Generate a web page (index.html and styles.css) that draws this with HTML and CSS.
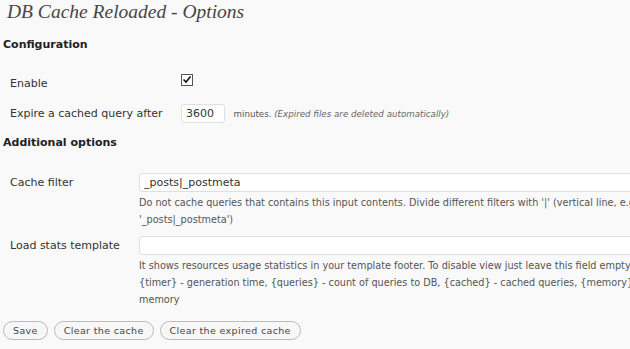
FILE: index.html
```
<!DOCTYPE html>
<html lang="en">
<head>
    <meta charset="UTF-8">
    <title>DB Cache Reloaded - Options</title>
    <link rel="stylesheet" href="styles.css">
</head>
<body>
    <div class="wrap">
        <h2 class="page-title">DB Cache Reloaded - Options</h2>
        <form class="options-form">
            <h3 class="section-title">Configuration</h3>
            <div class="form-table config-table">
                <div class="row row-enable">
                    <label class="row-label" for="enable">Enable</label>
                    <div class="row-field">
                        <span class="check" id="enable" role="checkbox" aria-checked="true">
                            <svg xmlns="http://www.w3.org/2000/svg" viewBox="0 0 12 12" width="12" height="12">
                                <rect x="0.5" y="0.5" width="11" height="11" fill="#fff" stroke="#555"/>
                                <path d="M2.5 5.5l2.5 2.5 4.5-5.5" fill="none" stroke="#111" stroke-width="1.6"/>
                            </svg>
                        </span>
                    </div>
                </div>
                <div class="row row-expire">
                    <label class="row-label" for="expire">Expire a cached query after</label>
                    <div class="row-field">
                        <input type="text" id="expire" class="small-text" value="3600">
                        <span class="unit">minutes. <em>(Expired files are deleted automatically)</em></span>
                    </div>
                </div>
            </div>

            <h3 class="section-title">Additional options</h3>
            <div class="form-table extra-table">
                <div class="row row-filter">
                    <label class="row-label" for="filter">Cache filter</label>
                    <div class="row-field">
                        <input type="text" id="filter" class="wide-text" value="_posts|_postmeta">
                        <p class="desc">Do not cache queries that contains this input contents. Divide different filters with '|' (vertical line, e.g. '_posts|_postmeta')</p>
                    </div>
                </div>
                <div class="row row-stats">
                    <label class="row-label" for="stats">Load stats template</label>
                    <div class="row-field">
                        <input type="text" id="stats" class="wide-text" value="">
                        <p class="desc">It shows resources usage statistics in your template footer. To disable view just leave this field empty. {timer} - generation time, {queries} - count of queries to DB, {cached} - cached queries, {memory} - memory</p>
                    </div>
                </div>
            </div>

            <div class="buttons">
                <button type="button" class="button">Save</button>
                <button type="button" class="button">Clear the cache</button>
                <button type="button" class="button">Clear the expired cache</button>
            </div>
        </form>
    </div>
</body>
</html>
```

FILE: styles.css
```
html, body {
    margin: 0;
    padding: 0;
    background: #f9f9f9;
}

html {
    overflow: hidden;
}

body {
    font-family: "DejaVu Sans", Verdana, sans-serif;
    font-size: 11px;
    color: #333;
    width: 700px;
    height: 349px;
}

.wrap {
    padding: 0 0 0 3px;
}

.page-title {
    margin: 0;
    padding: 0 0 0 4px;
    font-family: "Liberation Serif", Georgia, serif;
    font-style: italic;
    font-weight: normal;
    font-size: 19.5px;
    line-height: 24px;
    color: #464646;
}

.section-title {
    margin: 0;
    font-size: 11px;
    font-weight: bold;
    color: #222;
}

.options-form > .section-title:first-child {
    padding-top: 14px;
}

.row {
    display: grid;
    align-items: start;
}

.config-table .row {
    grid-template-columns: 178px 1fr;
}

.extra-table .row {
    grid-template-columns: 136px 516px;
}

.row-label {
    padding-left: 7px;
    color: #333;
    font-size: 11px;
}

.row-enable {
    padding-top: 23px;
    line-height: 13px;
}

.row-enable .row-label {
    padding-top: 3px;
}

.check {
    display: block;
    width: 12px;
    height: 12px;
}

.check svg {
    display: block;
}

.row-expire {
    padding-top: 14px;
    padding-bottom: 13px;
}

.row-expire .row-label {
    padding-top: 3px;
}

.small-text {
    width: 44px;
    height: 19px;
    box-sizing: border-box;
    border: 1px solid #dfdfdf;
    border-radius: 3px;
    background: #fff;
    font-family: inherit;
    font-size: 11px;
    color: #333;
    padding: 0 4px;
    margin: 0 5px 0 0;
    vertical-align: middle;
}

.unit {
    font-size: 8.7px;
    color: #555;
    vertical-align: middle;
}

.unit em {
    color: #666;
}

.row-filter {
    padding-top: 24px;
}

.row-filter .row-label,
.row-stats .row-label {
    padding-top: 3px;
}

.row-stats {
    padding-top: 8px;
}

.wide-text {
    display: block;
    width: 100%;
    height: 19px;
    box-sizing: border-box;
    border: 1px solid #dfdfdf;
    border-radius: 3px 0 0 3px;
    background: #fff;
    font-family: inherit;
    font-size: 11px;
    color: #333;
    padding: 0 4px;
    margin: 0;
}

.desc {
    margin: 2px 0 0;
    font-size: 9.7px;
    line-height: 17px;
    color: #555;
}

.buttons {
    display: flex;
    gap: 6px;
    padding-top: 13px;
}

.button {
    font-family: inherit;
    font-size: 9.5px;
    letter-spacing: 0.35px;
    color: #464646;
    background: #f7f7f7;
    border: 1px solid #bbb;
    border-radius: 11px;
    height: 19px;
    padding: 0 9px;
    cursor: pointer;
}
```
